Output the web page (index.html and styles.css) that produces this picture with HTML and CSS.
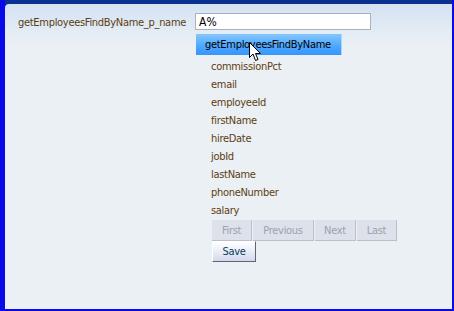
FILE: index.html
```html
<!DOCTYPE html>
<html lang="en">
<head>
    <meta charset="UTF-8">
    <title>Find Employees</title>
    <link rel="stylesheet" href="styles.css">
</head>
<body>
<div class="screen">
    <div class="titlebar"></div>
    <div class="panel">
        <div class="param-row">
            <label class="param-label" for="p-name">getEmployeesFindByName_p_name</label>
            <div class="param-field">
                <input id="p-name" class="text-input" type="text" value="A%">
                <div class="choice-list">
                    <div class="choice selected">getEmployeesFindByName</div>
                    <div class="choice first-plain">commissionPct</div>
                    <div class="choice">email</div>
                    <div class="choice">employeeId</div>
                    <div class="choice">firstName</div>
                    <div class="choice">hireDate</div>
                    <div class="choice">jobId</div>
                    <div class="choice">lastName</div>
                    <div class="choice">phoneNumber</div>
                    <div class="choice">salary</div>
                </div>
                <div class="nav-bar">
                    <button class="nav-btn btn-first" disabled>First</button>
                    <button class="nav-btn btn-prev" disabled>Previous</button>
                    <button class="nav-btn btn-next" disabled>Next</button>
                    <button class="nav-btn btn-last" disabled>Last</button>
                </div>
                <button class="save-btn">Save</button>
            </div>
        </div>
        <svg class="pointer" width="13" height="20" viewBox="0 0 13 20">
            <path d="M0.5 0.5 L0.5 15.5 L4 12 L6.5 18.5 L9 17.5 L6.5 11.5 L11.5 11.5 Z" fill="#fff" stroke="#000" stroke-width="1"/>
        </svg>
    </div>
</div>
</body>
</html>
```

FILE: styles.css
```css
body {
    margin: 0;
    font-family: "DejaVu Sans Condensed", "DejaVu Sans", sans-serif;
    font-size: 11px;
    letter-spacing: -0.3px;
}

.screen {
    width: 454px;
    height: 311px;
    box-sizing: border-box;
    padding: 0 2px 2px 5px;
    background-color: #0a0ae8;
    display: flex;
    flex-direction: column;
}

.titlebar {
    height: 4px;
    background-color: #0a3190;
}

.panel {
    flex: 1;
    position: relative;
    border-top-left-radius: 4px;
    background: linear-gradient(#d3e2f3 0, #e4ecf4 28px, #ebf0f4 45px, #ebf0f4 100%);
}

.param-row {
    display: flex;
    padding: 9px 0 0 13px;
}

.param-label {
    color: #5b3d12;
    width: 177px;
    padding-top: 3px;
    white-space: nowrap;
}

.param-field {
    display: flex;
    flex-direction: column;
    align-items: flex-start;
}

.text-input {
    width: 176px;
    height: 17px;
    box-sizing: border-box;
    margin: 0;
    padding: 0 3px;
    border: 1px solid #a9b2bc;
    background-color: #fff;
    font-family: inherit;
    font-size: 12px;
    color: #000;
    outline: none;
}

.choice-list {
    display: flex;
    flex-direction: column;
    margin-top: 4px;
}

.choice {
    height: 18px;
    line-height: 18px;
    padding-left: 16px;
    color: #5b3d12;
}

.choice.first-plain {
    margin-top: 3px;
}

.choice.selected {
    width: 146px;
    height: 21px;
    line-height: 21px;
    box-sizing: border-box;
    padding-left: 9px;
    margin-left: 1px;
    color: #000;
    background: linear-gradient(#86c6ff, #4aa6ff 60%, #3795fb);
    border-right: 1px solid #a9d6ff;
}

.nav-bar {
    display: flex;
    margin-left: 17px;
}

.nav-btn {
    height: 21px;
    margin: 0 1px 0 0;
    padding: 0;
    border: none;
    border-right: 1px solid #b9c0cb;
    border-bottom: 1px solid #b9c0cb;
    background-color: #dde1ea;
    color: #9aa3ae;
    font-family: inherit;
    font-size: 11px;
    letter-spacing: inherit;
}

.btn-first {
    width: 40px;
}

.btn-prev {
    width: 61px;
}

.btn-next {
    width: 41px;
}

.btn-last {
    width: 40px;
}

.save-btn {
    width: 44px;
    height: 21px;
    margin: 0 0 0 17px;
    padding: 0;
    border: 1px solid #fff;
    border-right-color: #5d6474;
    border-bottom-color: #5d6474;
    background: linear-gradient(#ffffff, #e9edf6 50%, #d2d9ea);
    color: #0c3a5e;
    font-family: inherit;
    font-size: 11px;
    letter-spacing: inherit;
}

.pointer {
    position: absolute;
    left: 244px;
    top: 38px;
}
```
